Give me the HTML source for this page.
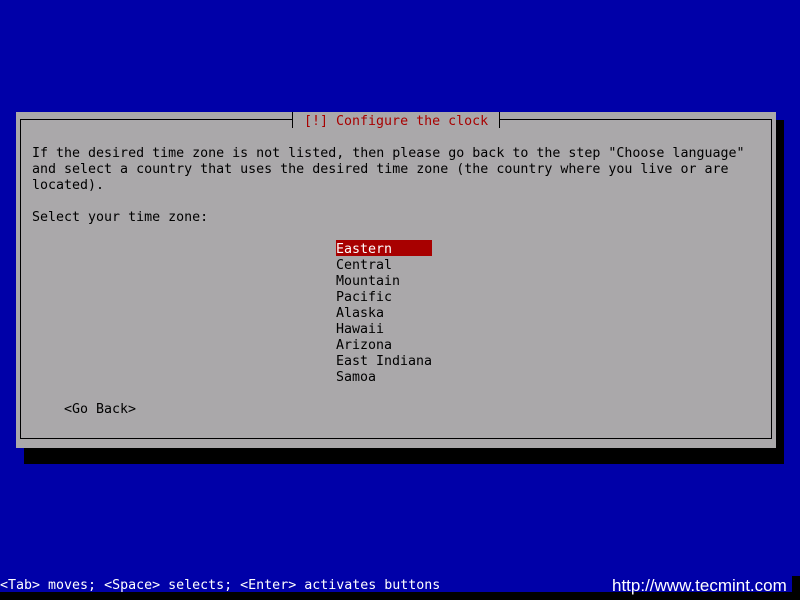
<!DOCTYPE html>
<html><head><style>
body{margin:0;width:800px;height:600px;background:#0000a8;position:relative;overflow:hidden;font-family:"DejaVu Sans Mono","Liberation Mono",monospace;font-size:13.3px;line-height:16px}
.t{position:absolute;white-space:pre;color:#000;padding-top:2px}
</style></head><body>
<div style="position:absolute;left:24px;top:120px;width:760px;height:344px;background:#000"></div>
<div style="position:absolute;left:16px;top:112px;width:760px;height:336px;background:#aaa8aa"></div>
<div style="position:absolute;left:20px;top:119px;width:752px;height:320px;border:1px solid #000;box-sizing:border-box"></div>
<div style="position:absolute;left:292px;top:112px;width:208px;height:16px;background:#aaa8aa"></div>
<div style="position:absolute;left:292px;top:112px;width:1px;height:16px;background:#000"></div>
<div style="position:absolute;left:499px;top:112px;width:1px;height:16px;background:#000"></div>
<div class="t" style="left:304px;top:112px;color:#a80000">[!] Configure the clock</div>
<div class="t" style="left:32px;top:144px">If the desired time zone is not listed, then please go back to the step "Choose language"
and select a country that uses the desired time zone (the country where you live or are
located).

Select your time zone:</div>
<div style="position:absolute;left:336px;top:240px;width:96px;height:16px;background:#a80000"></div>
<div class="t" style="left:336px;top:240px;color:#fff">Eastern</div>
<div class="t" style="left:336px;top:256px">Central
Mountain
Pacific
Alaska
Hawaii
Arizona
East Indiana
Samoa</div>
<div class="t" style="left:64px;top:400px">&lt;Go Back&gt;</div>
<div class="t" style="left:0;top:576px;color:#fff">&lt;Tab&gt; moves; &lt;Space&gt; selects; &lt;Enter&gt; activates buttons</div>
<div style="position:absolute;left:0;top:592px;width:800px;height:8px;background:#000"></div>
<div style="position:absolute;left:792px;top:576px;width:8px;height:24px;background:#000"></div>
<div style="position:absolute;left:612px;top:577px;color:#fff;font-family:'Liberation Sans',sans-serif;font-size:17px;line-height:18px;white-space:pre">http://www.tecmint.com</div>
</body></html>
